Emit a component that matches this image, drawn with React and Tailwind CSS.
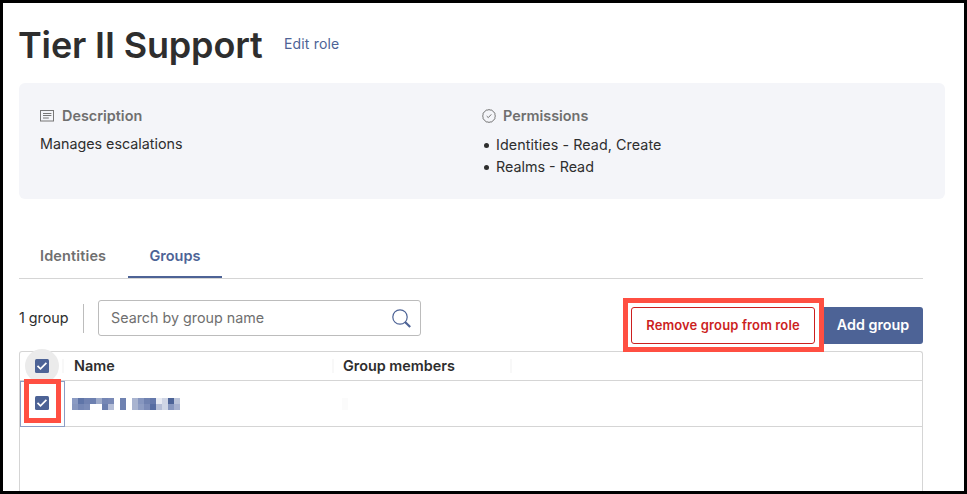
const BLUE = '#4d6396';

const redactedCells = [
  ['#8b9bc3', '#5f75a8', '#7082b1', '#6d80b0', '#9eabca', '#7486b4', '#7989b6', '', '#6f82b1', '', '#a9b4d0', '#8696bf', '#7082b0', '#6478ab', '#e8ebf3', '#cfd5e5', '#4c6397', '#bcc5da'],
  ['#8797bf', '#7587b5', '#7b8cb8', '', '', '#6a7eae', '#b5bed7', '', '#6f82b1', '', '#a9b4d0', '#8e9dc3', '#7c8cb8', '#566ca2', '#b5bed7', '#cfd6e6', '#8797bf', '#a6b1cf'],
];

function Checkbox() {
  return (
    <svg width="14" height="14" viewBox="0 0 14 14" className="shrink-0" aria-hidden="true">
      <rect width="14" height="14" rx="1.5" fill={BLUE} />
      <path d="M2.5 6.8 5.5 9.8 11.4 3.9" fill="none" stroke="#fff" strokeWidth="1.7" />
    </svg>
  );
}

function DescriptionIcon() {
  return (
    <svg width="14" height="12" viewBox="0 0 14 12" fill="none" stroke="#777" aria-hidden="true">
      <rect x="0.5" y="0.5" width="13" height="10.5" strokeWidth="1" />
      <path d="M3 3.5h8.4M3 5.5h8.4M3 8h5.8" strokeWidth="1" />
    </svg>
  );
}

function PermissionIcon() {
  return (
    <svg width="14" height="14" viewBox="0 0 14 14" fill="none" stroke="#666" strokeWidth="0.9" aria-hidden="true">
      <path d="M7 .5Q8 1.4 9.3 1 10.2 1 10.7 2 11.1 3 12.2 3.3 13.2 4 12.9 5.2 12.7 6.1 13.5 7 12.7 7.9 12.9 8.8 13.2 10 12.2 10.7 11.1 11 10.7 12 10.2 13 9.3 13 8 12.6 7 13.5 6 12.6 4.7 13 3.8 13 3.3 12 2.9 11 1.8 10.7.8 10 1.1 8.8 1.3 7.9.5 7 1.3 6.1 1.1 5.2.8 4 1.8 3.3 2.9 3 3.3 2 3.8 1 4.7 1 6 1.4 7 .5Z" />
      <path d="m4.7 7.1 1.6 1.5 3-3.2" />
    </svg>
  );
}

function SearchIcon() {
  return (
    <svg width="19" height="19" viewBox="0 0 19 19" fill="none" stroke={BLUE} aria-hidden="true">
      <circle cx="8" cy="8" r="7.2" strokeWidth="1.2" />
      <path d="m12.9 12.9 1.2 1.2" strokeWidth="1.2" />
      <path d="m13.3 13.3 4.9 4.7" strokeWidth="2.2" />
    </svg>
  );
}

export default function App() {
  return (
    <div className="flex h-[494px] w-[967px] flex-col overflow-hidden border-[3px] border-black bg-white pl-4 font-['Inter','Liberation_Sans',sans-serif] text-[14.3px] whitespace-nowrap text-[#2e2e2e]">
      <header className="flex h-20 shrink-0 items-center pt-1">
        <h1 className="-ml-px w-[266px] text-[36px] font-[560] tracking-[-0.15px]">Tier II Support</h1>
        <a className="-mt-1 text-[14px] tracking-[0.16px] text-[#4d6396]">Edit role</a>
      </header>

      <section className="flex h-[116px] w-[926px] shrink-0 rounded-md bg-[#f4f5f9] pt-[22px] pl-[21px]">
        <div className="w-[442px]">
          <h2 className="flex h-[22px] items-center gap-2 text-[14.4px] font-semibold text-[#6f6f6f]"><DescriptionIcon />Description</h2>
          <p className="mt-1.5 leading-[22px]">Manages escalations</p>
        </div>
        <div>
          <h2 className="flex h-[22px] items-center gap-[7px] text-[14.4px] font-semibold text-[#6f6f6f]"><PermissionIcon />Permissions</h2>
          <ul className="mt-[7px] leading-[22px]">
            <li className="flex items-center gap-[7px] pl-0.5 tracking-[0.08px]"><i className="size-[5px] rounded-full bg-[#2e2e2e]" />Identities - Read, Create</li>
            <li className="flex items-center gap-[7px] pl-0.5"><i className="size-[5px] rounded-full bg-[#2e2e2e]" />Realms - Read</li>
          </ul>
        </div>
      </section>

      <nav className="mt-[35px] flex h-[45px] w-[904px] shrink-0 border-b border-[#d5d5d5] text-[14.5px] font-semibold">
        <div className="flex w-[109px] items-center pl-[21px] tracking-[0.13px] text-[#6f6f6f]">Identities</div>
        <div className="flex h-11 w-[94px] items-center justify-center border-b-2 border-[#4d6396] pt-0.5 text-[#4d6396]">Groups</div>
      </nav>

      <div className="flex h-[72px] w-[904px] shrink-0 items-start pt-[21px]">
        <div className="mt-1 flex h-[29px] w-[65px] items-center border-r border-[#bcbcbc] pb-px">1 group</div>
        <div className="ml-[14px] flex h-9 w-[323px] items-center justify-between rounded-[3px] border border-[#bcbcbc] pr-[9.5px] pl-3 text-[#6f6f6f]">
          <span className="text-[14.3px]">Search by group name</span><SearchIcon />
        </div>
        <div className="relative z-10 -mt-[2px] ml-auto flex h-[54px] w-[201px] items-center border-[5px] border-[#ff4f42] bg-white pl-[3px]">
          <button className="h-[37px] w-[184px] rounded-[3px] border border-[#cc1f1f] pt-px text-[13px] font-semibold tracking-[0.13px] text-[#cc1f1f]">Remove group from role</button>
        </div>
        <button className="mt-[7px] h-[37px] w-[99px] rounded-r-[3px] bg-[#4d6396] pr-px pb-0.5 text-[14.3px] font-semibold text-white">Add group</button>
      </div>

      <div className="w-[904px] grow rounded-t-[3px] border border-b-0 border-[#d5d5d5]">
        <div className="flex h-[29px] items-center border-b border-[#d5d5d5] text-[14.4px] font-semibold">
          <div className="ml-[5px] flex size-[34px] shrink-0 items-center justify-center rounded-full bg-[#ebebeb]"><Checkbox /></div>
          <div className="ml-[3px] h-[14px] w-0.5 bg-[#f8f8f8]" />
          <div className="w-[268px] pl-[10px]">Name</div>
          <div className="h-[14px] w-0.5 bg-[#f8f8f8]" />
          <div className="w-[176px] pl-[9px]">Group members</div>
          <div className="h-[14px] w-0.5 bg-[#f8f8f8]" />
        </div>
        <div className="flex h-[46px] border-b border-[#d5d5d5]">
          <div className="flex h-[46px] w-[45px] shrink-0 justify-center border border-[#8b9dc5]">
            <div className="relative -mt-[3px] -ml-px flex h-[44px] w-[37px] items-center justify-center border-5 border-[#ff4f42] bg-white pt-[3px]"><Checkbox /></div>
          </div>
          <div className="ml-[7px] w-[270px] pt-[17px]">
            {redactedCells.map((row, y) => (
              <div key={y} className="flex">
                {row.map((color, x) => <span key={x} className="size-1.5" style={{ backgroundColor: color }} />)}
              </div>
            ))}
          </div>
          <div className="mt-[17px] h-3 w-1.5 bg-[#fbfbfb]" />
        </div>
      </div>
    </div>
  );
}
